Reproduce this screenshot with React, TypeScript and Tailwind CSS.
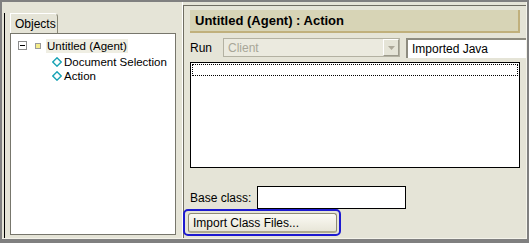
import React from 'react'

const font = { fontFamily: '"Liberation Sans", Arial, sans-serif' }

function Diamond() {
    return (
        <svg width="10" height="10" viewBox="0 0 10 10" className="shrink-0">
            <path d="M5 0.8 L9.2 5 L5 9.2 L0.8 5 Z" fill="#fff" stroke="#1aa3b5" strokeWidth="1.4" />
        </svg>
    )
}

function TreePanel() {
    return (
        <div className="flex flex-col w-[177px] pl-[2px] pt-[11px]">
            <div className="flex flex-col flex-1 border-l border-black pl-[5px] pb-[3px]">
                {/* tab */}
                <div className="flex">
                    <div className="w-[48px] h-[20px] border-t border-l border-white border-r border-r-[#8a8878] rounded-tr-[4px] bg-[#e5e4d7] flex items-center pl-[4px] text-[12px] text-black">
                        Objects
                    </div>
                </div>
                <div className="w-[166px] flex-1 border border-[#77766c] bg-white pt-[4px]">
                    <div className="flex items-center h-[15px] pl-[7px]">
                        <div className="w-[9px] h-[9px] border border-[#8c8c8c] flex items-center justify-center">
                            <div className="w-[5px] h-px bg-black" />
                        </div>
                        <div className="w-[6px] h-[6px] ml-[8px] border border-[#9a9a9a] bg-[#f4ec8a]" />
                        <div className="ml-[5px] px-[1px] h-[14px] leading-[14px] bg-[#efeee3] text-[11.5px] text-black">Untitled (Agent)</div>
                    </div>
                    <div className="flex items-center h-[15px] pl-[41px] mt-[1px] gap-[2px]">
                        <Diamond />
                        <span className="text-[11.5px] text-black leading-[14px]">Document Selection</span>
                    </div>
                    <div className="flex items-center h-[14px] pl-[41px] gap-[2px]">
                        <Diamond />
                        <span className="text-[11.5px] text-black leading-[14px]">Action</span>
                    </div>
                </div>
            </div>
        </div>
    )
}

function ActionPanel() {
    return (
        <div className="flex flex-col flex-1 pt-[3px]">
            <div className="flex flex-col flex-1 border-t border-l border-[#6f6d62] pl-[6px] pt-[4px]">
                <div className="h-[23px] mr-[6px] bg-[#d7d4b6] border-b-2 border-r-2 border-[#c0b07c] flex items-center pl-[5px]">
                    <span className="text-[13px] font-bold text-black">Untitled (Agent) : Action</span>
                </div>

                <div className="flex items-center mt-[5px] h-[19px]">
                    <span className="w-[33px] text-[12px] text-black">Run</span>
                    <div className="w-[177px] h-[19px] border border-[#b3b1a2] bg-[#ebeadf] flex items-center">
                        <span className="flex-1 pl-[4px] text-[12px] text-[#a8a698]">Client</span>
                        <div className="w-[16px] h-[17px] border-l border-t border-white border-r border-b border-r-[#9c9a8c] border-b-[#9c9a8c] bg-[#e5e4d7] flex items-center justify-center">
                            <svg width="7" height="4" viewBox="0 0 7 4"><path d="M0 0 H7 L3.5 4 Z" fill="#aca899" /></svg>
                        </div>
                    </div>
                    <div className="ml-[6px] flex-1 h-[20px] border-t-2 border-l-2 border-[#8e8c80] bg-white flex items-center pl-[4px] text-[12px] text-black">
                        Imported Java
                    </div>
                </div>

                <div className="mt-[5px] mr-[6px] h-[106px] border border-black bg-white p-px">
                    <div className="h-[12px] border border-dotted border-black" />
                </div>

                <div className="flex items-center mt-[18px] h-[23px]">
                    <span className="w-[67px] text-[12px] text-black">Base class:</span>
                    <div className="w-[149px] h-[23px] border border-black bg-white" />
                </div>

                <div className="flex">
                    <div className="ml-[-7px] border-2 border-[#1d1ad0] rounded-[5px] pl-[3px] pt-[2px] pb-[1px] pr-[2px]">
                        <div className="w-[149px] h-[20px] rounded-[3px] border border-[#8d8b75] border-b-2 border-b-[#aeab90] bg-gradient-to-b from-[#fbfaf4] to-[#e8e6d8] flex items-center pl-[4px] text-[12px] text-black">
                            Import Class Files...
                        </div>
                    </div>
                </div>
            </div>
        </div>
    )
}

export default function App() {
    return (
        <div className="w-[529px] h-[243px] bg-[#808080] pt-[2px] pl-[2px] pr-[2px] pb-[4px] flex" style={font}>
            <div className="flex flex-1 bg-[#e5e4d7] border-b border-r border-[#f4f3ea]">
                <TreePanel />
                <div className="w-[4px] flex justify-end">
                    <div className="w-px bg-white" />
                </div>
                <ActionPanel />
            </div>
        </div>
    )
}
